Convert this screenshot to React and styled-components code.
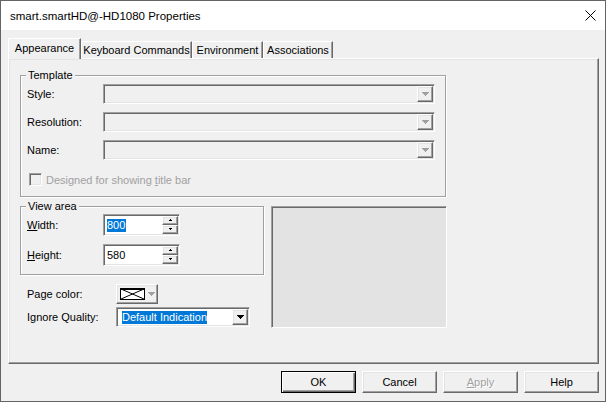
import styled, { createGlobalStyle, css } from "styled-components";

const GlobalStyle = createGlobalStyle`
  html, body {
    margin: 0;
    padding: 0;
    background: #f0f0f0;
  }
  body {
    font-family: "Liberation Sans", Arial, sans-serif;
    font-size: 11px;
    color: #000;
  }
  * {
    box-sizing: border-box;
  }
`;

const raised = css`
  border: 1px solid;
  border-color: #fff #696969 #696969 #fff;
  box-shadow: inset -1px -1px 0 #a0a0a0, inset 1px 1px 0 #e3e3e3;
  background: #f0f0f0;
`;

const sunken = css`
  border: 1px solid;
  border-color: #a0a0a0 #fff #fff #a0a0a0;
  box-shadow: inset 1px 1px 0 #696969, inset -1px -1px 0 #e3e3e3;
`;

const Window = styled.div`
  width: 606px;
  height: 402px;
  border: 1px solid #646464;
  background: #f0f0f0;
  display: flex;
  flex-direction: column;
`;

const TitleBar = styled.div`
  height: 29px;
  background: #fff;
  display: flex;
  align-items: center;
  justify-content: space-between;
  padding: 0 9px 0 9px;
  font-size: 11.5px;
`;

const Body = styled.div`
  flex: 1;
  display: flex;
  flex-direction: column;
  padding: 8px 6px 0 7px;
`;

const TabStrip = styled.div`
  height: 20px;
  display: flex;
  align-items: flex-end;
`;

const Tab = styled.div`
  width: ${(p) => p.$w}px;
  height: ${(p) => (p.$active ? 21 : 17)}px;
  margin-bottom: ${(p) => (p.$active ? -1 : 0)}px;
  z-index: ${(p) => (p.$active ? 1 : 0)};
  border: 1px solid;
  border-bottom: none;
  border-color: #fff #696969 transparent #fff;
  box-shadow: inset -1px 0 0 #a0a0a0;
  background: #f0f0f0;
  display: flex;
  align-items: center;
  justify-content: center;
  padding-bottom: ${(p) => (p.$active ? 2 : 0)}px;
  white-space: nowrap;
`;

const Panel = styled.div`
  height: 306px;
  ${raised}
  padding: 10px 0 0 11px;
`;

const Group = styled.fieldset`
  margin: 0;
  min-width: 0;
  width: ${(p) => p.$w}px;
  border: 1px solid #a0a0a0;
  box-shadow: inset 1px 1px 0 #fff, 1px 1px 0 #fff;
  padding: ${(p) => p.$pad};
`;

const Caption = styled.legend`
  padding: 0 2px;
  margin-left: -1px;
  line-height: 13px;
  background: #f0f0f0;
`;

const FieldRow = styled.div`
  display: grid;
  grid-template-columns: ${(p) => p.$label}px auto;
  align-items: center;
  margin-top: ${(p) => p.$gap || 0}px;
`;

const Label = styled.span`
  white-space: nowrap;
`;

const Combo = styled.div`
  ${sunken}
  width: ${(p) => p.$w}px;
  height: 20px;
  padding: 1px;
  display: flex;
  align-items: stretch;
  background: ${(p) => (p.$disabled ? "#f0f0f0" : "#fff")};
`;

const ComboText = styled.div`
  flex: 1;
  display: flex;
  align-items: center;
  padding-left: 4px;
  white-space: nowrap;
`;

const Selected = styled.span`
  background: #0078d7;
  color: #fff;
  line-height: 13px;
  padding-right: ${(p) => p.$pad || 0}px;
`;

const DropButton = styled.div`
  ${raised}
  width: 16px;
  display: flex;
  align-items: center;
  justify-content: center;
`;

const CheckRow = styled.div`
  display: flex;
  align-items: center;
  gap: 4px;
  margin-top: 13px;
  padding-left: 2px;
  color: #a0a0a0;
`;

const CheckBox = styled.div`
  ${sunken}
  width: 13px;
  height: 13px;
  background: #f0f0f0;
`;

const Lower = styled.div`
  display: flex;
  gap: 7px;
  margin-top: 3px;
`;

const LeftColumn = styled.div`
  display: flex;
  flex-direction: column;
  width: 244px;
`;

const SpinBox = styled.div`
  ${sunken}
  width: 77px;
  height: 22px;
  padding: 1px;
  display: flex;
  background: #fff;
`;

const SpinText = styled.div`
  flex: 1;
  display: flex;
  align-items: center;
  padding-left: 2px;
`;

const SpinButtons = styled.div`
  width: 16px;
  display: flex;
  flex-direction: column;
`;

const SpinButton = styled.div`
  ${raised}
  flex: 1;
  display: flex;
  align-items: center;
  justify-content: center;
`;

const Options = styled.div`
  display: flex;
  flex-direction: column;
  gap: 3px;
  margin-top: 9px;
  padding-left: 7px;
`;

const ColorButton = styled.div`
  ${raised}
  width: 42px;
  height: 20px;
  display: flex;
  align-items: center;
  gap: 3px;
  padding: 0 0 1px 3px;
`;

const Preview = styled.div`
  ${sunken}
  width: 176px;
  height: 122px;
  margin-top: 6px;
  background: #e3e3e3;
`;

const ButtonBar = styled.div`
  display: flex;
  justify-content: flex-end;
  gap: 6px;
  margin-top: 7px;
`;

const Button = styled.div`
  ${raised}
  width: 75px;
  height: 22px;
  display: flex;
  align-items: center;
  justify-content: center;
  color: ${(p) => (p.$disabled ? "#a0a0a0" : "#000")};
  text-shadow: ${(p) => (p.$disabled ? "1px 1px 0 #fff" : "none")};
  ${(p) =>
    p.$default &&
    css`
      border: 1px solid #000;
      box-shadow: inset 1px 1px 0 #fff, inset -1px -1px 0 #696969,
        inset -2px -2px 0 #a0a0a0;
    `}
`;

const Arrow = ({ color = "#000" }) => (
  <svg width="7" height="4" viewBox="0 0 7 4" shapeRendering="crispEdges">
    <path d="M0 0H7V1H6V2H5V3H4V4H3V3H2V2H1V1H0Z" fill={color} />
  </svg>
);

const SpinArrow = ({ up }) => (
  <svg width="5" height="3" viewBox="0 0 5 3" shapeRendering="crispEdges">
    <path
      d={up ? "M2 0H3V1H4V2H1V1H2Z" : "M1 0H4V1H3V2H2V1H1Z"}
      fill="#000"
    />
  </svg>
);

const CloseIcon = () => (
  <svg width="11" height="11" viewBox="0 0 11 11">
    <path d="M0.5 0.5L10.5 10.5M10.5 0.5L0.5 10.5" stroke="#000" strokeWidth="1" />
  </svg>
);

const Swatch = () => (
  <svg width="25" height="12" viewBox="0 0 25 12" shapeRendering="crispEdges">
    <rect x="0.5" y="0.5" width="24" height="11" fill="#fff" stroke="#000" />
    <rect x="0" y="0" width="25" height="2" fill="#000" />
    <path d="M1 1L24 11M24 1L1 11" stroke="#000" strokeWidth="1" shapeRendering="auto" />
  </svg>
);

function TemplateCombo({ label, gap }) {
  return (
    <FieldRow $label={76} $gap={gap}>
      <Label>{label}</Label>
      <Combo $w={332} $disabled>
        <ComboText />
        <DropButton>
          <Arrow color="#a0a0a0" />
        </DropButton>
      </Combo>
    </FieldRow>
  );
}

function Spinner({ children }) {
  return (
    <SpinBox>
      <SpinText>{children}</SpinText>
      <SpinButtons>
        <SpinButton>
          <SpinArrow up />
        </SpinButton>
        <SpinButton>
          <SpinArrow />
        </SpinButton>
      </SpinButtons>
    </SpinBox>
  );
}

export default function App() {
  return (
    <>
      <GlobalStyle />
      <Window>
        <TitleBar>
          <span>smart.smartHD@-HD1080 Properties</span>
          <CloseIcon />
        </TitleBar>
        <Body>
          <TabStrip>
            <Tab $w={73} $active>Appearance</Tab>
            <Tab $w={111}>Keyboard Commands</Tab>
            <Tab $w={71}>Environment</Tab>
            <Tab $w={70}>Associations</Tab>
          </TabStrip>
          <Panel>
            <Group $w={426} $pad="2px 10px 10px 6px">
              <Caption>Template</Caption>
              <TemplateCombo label="Style:" />
              <TemplateCombo label="Resolution:" gap={8} />
              <TemplateCombo label="Name:" gap={8} />
              <CheckRow>
                <CheckBox />
                <span>
                  Designed for showing <u>t</u>itle bar
                </span>
              </CheckRow>
            </Group>
            <Lower>
              <LeftColumn>
                <Group $w={244} $pad="1px 0 8px 6px">
                  <Caption>View area</Caption>
                  <FieldRow $label={76}>
                    <Label>
                      <u>W</u>idth:
                    </Label>
                    <Spinner>
                      <Selected $pad={1}>800</Selected>
                    </Spinner>
                  </FieldRow>
                  <FieldRow $label={76} $gap={8}>
                    <Label>
                      <u>H</u>eight:
                    </Label>
                    <Spinner>580</Spinner>
                  </FieldRow>
                </Group>
                <Options>
                  <FieldRow $label={89}>
                    <Label>Page color:</Label>
                    <ColorButton>
                      <Swatch />
                      <Arrow color="#a0a0a0" />
                    </ColorButton>
                  </FieldRow>
                  <FieldRow $label={89}>
                    <Label>Ignore Quality:</Label>
                    <Combo $w={134}>
                      <ComboText>
                        <Selected>Default Indication</Selected>
                      </ComboText>
                      <DropButton>
                        <Arrow />
                      </DropButton>
                    </Combo>
                  </FieldRow>
                </Options>
              </LeftColumn>
              <Preview />
            </Lower>
          </Panel>
          <ButtonBar>
            <Button $default>OK</Button>
            <Button>Cancel</Button>
            <Button $disabled>
              <span>
                <u>A</u>pply
              </span>
            </Button>
            <Button>Help</Button>
          </ButtonBar>
        </Body>
      </Window>
    </>
  );
}
